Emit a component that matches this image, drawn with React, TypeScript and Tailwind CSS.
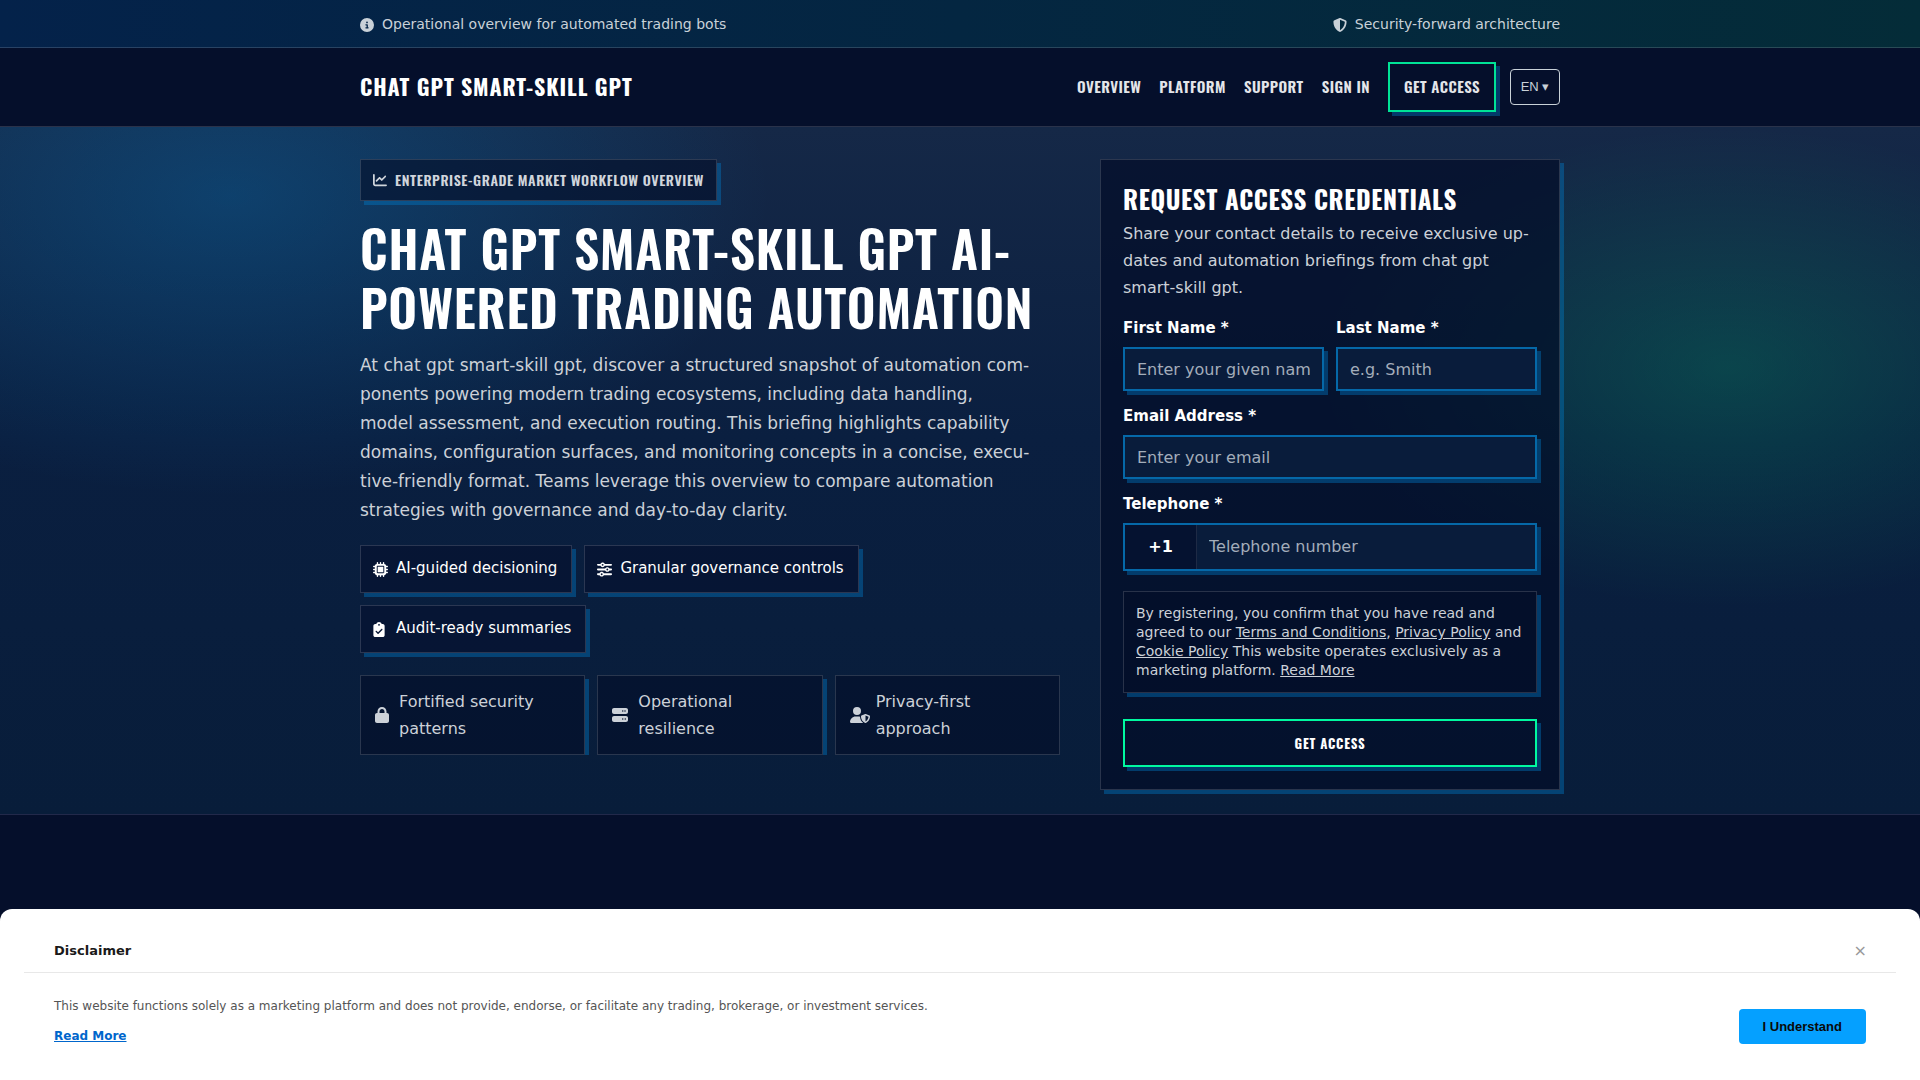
import { useState } from 'react'
import {
  FaChartLine,
  FaCircleInfo,
  FaClipboardCheck,
  FaLock,
  FaMicrochip,
  FaServer,
  FaShieldHalved,
  FaSliders,
  FaUserShield,
} from 'react-icons/fa6'

const navLinks = ['Overview', 'Platform', 'Support', 'Sign In']

const chips = [
  { icon: FaMicrochip, label: 'AI-guided decisioning', iconClass: 'w-[15px]' },
  { icon: FaSliders, label: 'Granular governance controls', iconClass: 'w-[15px]' },
  { icon: FaClipboardCheck, label: 'Audit-ready summaries', iconClass: 'w-3 mr-[3px]' },
]

const trustItems = [
  { icon: FaLock, label: 'Fortified security patterns', iconClass: 'w-[14px] mr-[10px]' },
  { icon: FaServer, label: 'Operational resilience', iconClass: 'w-4 mr-[10px]' },
  { icon: FaUserShield, label: 'Privacy-first approach', iconClass: 'w-5 mr-[6px]' },
]

const heading = "font-['Oswald',sans-serif] uppercase"
const shadow = 'shadow-[4px_4px_0_rgba(0,130,210,0.38)]'
const field = `h-11 w-full border-2 border-[#0568a8] bg-[#091c3b] px-3 text-base text-white placeholder:text-[#a3adba] ${shadow}`

function TopBar() {
  return (
    <div className="border-b border-white/15 bg-linear-to-r from-[#04224a] via-[#042641] to-[#042c38] text-sm leading-[23px] text-[#c9d1d8]">
      <div className="mx-auto flex max-w-[1200px] items-center justify-between pt-[13px] pb-[11px]">
        <div className="flex items-center gap-2">
          <FaCircleInfo className="size-[14px]" />
          <span>Operational overview for automated trading bots</span>
        </div>
        <div className="flex items-center gap-2">
          <FaShieldHalved className="size-[14px]" />
          <span>Security-forward architecture</span>
        </div>
      </div>
    </div>
  )
}

function Header() {
  return (
    <header className="border-b border-white/15 bg-[#050f2b]">
      <div className="mx-auto flex max-w-[1200px] items-center justify-between py-[14px]">
        <a href="#" className={`${heading} pb-0.5 text-[22px] leading-8 font-bold tracking-[0.04em] text-white`}>
          chat gpt smart-skill gpt
        </a>
        <div className="flex items-center gap-[14px]">
          <nav className={`${heading} flex items-center gap-[18px] text-[15px] leading-[26px] font-semibold tracking-[0.03em] text-[#e4e6ea]`}>
            {navLinks.map((label) => (
              <a key={label} href="#" className="pb-0.5">
                {label}
              </a>
            ))}
            <a href="#" className={`border-2 border-[#00e396] px-[14px] pt-[9px] pb-[11px] ${shadow}`}>
              Get Access
            </a>
          </nav>
          <button className="h-9 w-[50px] rounded border border-[#c9d1d8] font-['Liberation_Sans',sans-serif] text-[13px] text-[#c9d1d8]">
            EN ▾
          </button>
        </div>
      </div>
    </header>
  )
}

function Intro() {
  return (
    <div>
      <div className={`inline-flex h-[42px] items-center gap-2 border border-white/15 bg-[#030d28]/60 px-3 text-[#d0d5dc] ${shadow}`}>
        <FaChartLine className="size-[14px]" />
        <span className={`${heading} text-sm font-semibold tracking-[0.04em]`}>
          Enterprise-grade market workflow overview
        </span>
      </div>
      <h1 className={`${heading} mt-[17px] text-[50px] leading-[59px] font-semibold tracking-[0.015em] text-white`}>
        chat gpt smart-skill gpt AI-Powered Trading Automation
      </h1>
      <p className="mt-[15px] max-w-[671px] text-[17px] leading-[29px] text-[#ccd1d8]">
        At chat gpt smart-skill gpt, discover a structured snapshot of automation com&shy;ponents powering
        modern trading ecosystems, including data handling, model assessment, and execution routing. This
        briefing highlights capability domains, configuration surfaces, and monitoring concepts in a concise,
        execu&shy;tive-friendly format. Teams leverage this overview to compare automation strategies with
        governance and day-to-day clarity.
      </p>
      <ul className="mt-5 flex flex-wrap gap-3">
        {chips.map(({ icon: Icon, label, iconClass }) => (
          <li
            key={label}
            className={`flex h-12 items-center border border-white/15 bg-[#050f2f]/60 pr-[14px] pl-3 text-[15px] leading-6 text-white ${shadow}`}
          >
            <Icon className={`h-[15px] shrink-0 ${iconClass}`} />
            <span className="pb-[3px] pl-2">{label}</span>
          </li>
        ))}
      </ul>
      <ul className="mt-[22px] grid grid-cols-3 gap-3 overflow-hidden">
        {trustItems.map(({ icon: Icon, label, iconClass }) => (
          <li
            key={label}
            className={`flex items-center border border-white/15 bg-[#030d28]/60 px-[14px] py-3 text-base leading-[27px] text-[#ccd1d8] ${shadow}`}
          >
            <Icon className={`h-4 shrink-0 ${iconClass}`} />
            <span className="w-36">{label}</span>
          </li>
        ))}
      </ul>
    </div>
  )
}

function AccessForm() {
  const [firstName, setFirstName] = useState('')
  const [lastName, setLastName] = useState('')
  const [email, setEmail] = useState('')
  const [phone, setPhone] = useState('')

  return (
    <form
      className={`border border-white/15 bg-[#030d28]/70 p-[22px] ${shadow}`}
      onSubmit={(e) => e.preventDefault()}
    >
      <h2 className={`${heading} mb-1 text-[25px] leading-[34px] font-bold tracking-wide text-white`}>
        Request access credentials
      </h2>
      <p className="text-base leading-[27px] text-[#ccd1d8]">
        Share your contact details to receive exclusive up&shy;dates and automation briefings from chat gpt
        smart-skill gpt.
      </p>
      <div className="mt-[14px] grid grid-cols-2 gap-3 text-[15px] leading-[26px] font-bold text-white">
        <div>
          <label htmlFor="first-name">First Name *</label>
          <input
            id="first-name"
            type="text"
            value={firstName}
            onChange={(e) => setFirstName(e.target.value)}
            className={`${field} mt-[6px] font-normal`}
            placeholder="Enter your given name"
          />
        </div>
        <div>
          <label htmlFor="last-name">Last Name *</label>
          <input
            id="last-name"
            type="text"
            value={lastName}
            onChange={(e) => setLastName(e.target.value)}
            className={`${field} mt-[6px] font-normal`}
            placeholder="e.g. Smith"
          />
        </div>
        <div className="col-span-2">
          <label htmlFor="email">Email Address *</label>
          <input
            id="email"
            type="email"
            value={email}
            onChange={(e) => setEmail(e.target.value)}
            className={`${field} mt-[6px] font-normal`}
            placeholder="Enter your email"
          />
        </div>
        <div className="col-span-2">
          <label htmlFor="phone">Telephone *</label>
          <div className={`mt-[6px] flex h-12 border-2 border-[#0568a8] bg-[#091c3b] text-base ${shadow}`}>
            <span className="flex w-[72px] items-center justify-center border-r border-white/10 bg-[#051230]">
              +1
            </span>
            <input
              id="phone"
              type="tel"
              value={phone}
              onChange={(e) => setPhone(e.target.value)}
              className="min-w-0 flex-1 px-3 font-normal placeholder:text-[#a3adba]"
              placeholder="Telephone number"
            />
          </div>
        </div>
      </div>
      <p className={`mt-5 border border-white/15 bg-[#030d28]/60 p-3 text-sm leading-[19px] text-[#ccd1d8] ${shadow}`}>
        By registering, you confirm that you have read and agreed to our{' '}
        <a href="#" className="underline">Terms and Conditions</a>,{' '}
        <a href="#" className="underline">Privacy Policy</a> and{' '}
        <a href="#" className="underline">Cookie Policy</a> This website operates exclusively as a marketing
        platform. <a href="#" className="underline">Read More</a>
      </p>
      <button
        type="submit"
        className={`${heading} mt-[26px] h-12 w-full border-2 border-[#00f9a0] pt-0.5 text-[13px] font-bold tracking-[0.06em] text-white ${shadow}`}
      >
        Get Access
      </button>
    </form>
  )
}

function Disclaimer({ onClose }: { onClose: () => void }) {
  return (
    <div className="fixed inset-x-0 bottom-0 rounded-t-xl bg-white px-6 pt-5 pb-[34px]">
      <div className="flex h-11 items-center justify-between border-b border-[#e8e8e8] pr-[29px] pl-[30px]">
        <h2 className="text-[13px] leading-7 font-bold text-[#1a1a1a]">Disclaimer</h2>
        <button onClick={onClose} aria-label="Close" className="text-base leading-7 text-[#999999]">
          ×
        </button>
      </div>
      <div className="flex items-end justify-between px-[30px] pt-[23px]">
        <div className="text-xs leading-5 text-[#555555]">
          <p>
            This website functions solely as a marketing platform and does not provide, endorse, or facilitate
            any trading, brokerage, or investment services.
          </p>
          <a href="#" className="mt-[10px] block font-bold text-[#0066cc] underline">
            Read More
          </a>
        </div>
        <button
          onClick={onClose}
          className="mb-0.5 h-[35px] rounded bg-[#05a0ff] px-6 font-['Liberation_Sans',sans-serif] text-[13px] font-bold text-[#0a0a0a]"
        >
          I Understand
        </button>
      </div>
    </div>
  )
}

export default function App() {
  const [showDisclaimer, setShowDisclaimer] = useState(true)

  return (
    <div lang="en" className="min-h-screen bg-[#050f2b] font-['DejaVu_Sans',sans-serif]">
      <TopBar />
      <Header />
      <main className="border-b border-[#22294a] bg-[radial-gradient(540px_300px_at_12%_10%,rgba(0,140,220,0.26),transparent),radial-gradient(420px_240px_at_90%_35%,rgba(0,255,130,0.16),transparent),linear-gradient(180deg,#152847,#0a1f40_45%,#081d3a)]">
        <div className="mx-auto grid max-w-[1200px] grid-cols-[minmax(0,1fr)_460px] items-start gap-10 pt-8 pb-6">
          <Intro />
          <AccessForm />
        </div>
      </main>
      {showDisclaimer && <Disclaimer onClose={() => setShowDisclaimer(false)} />}
    </div>
  )
}
